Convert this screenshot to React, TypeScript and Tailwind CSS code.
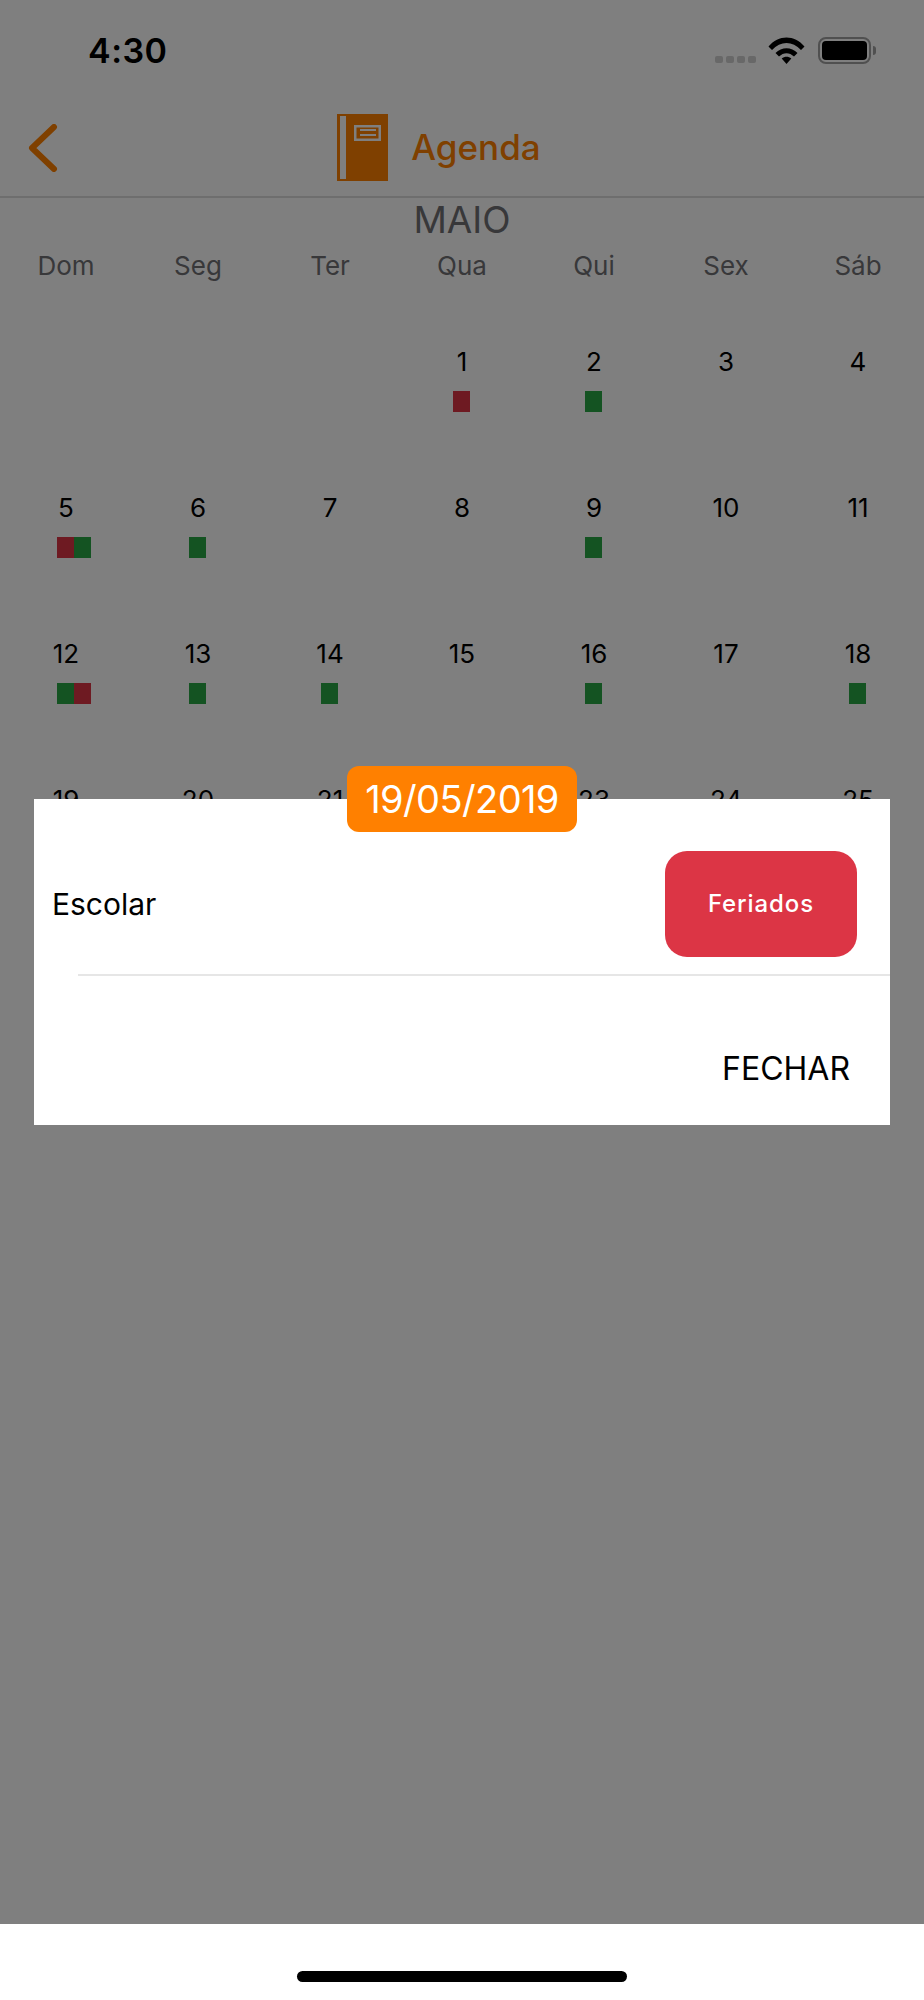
import React from "react";

const FONT = { fontFamily: "Inter, 'Liberation Sans', sans-serif" };

type Mark = "r" | "g";
const weekdays = ["Dom", "Seg", "Ter", "Qua", "Qui", "Sex", "Sáb"];
const days: (null | { n: number; m?: Mark[] })[] = [
  null, null, null,
  { n: 1, m: ["r"] }, { n: 2, m: ["g"] }, { n: 3 }, { n: 4 },
  { n: 5, m: ["r", "g"] }, { n: 6, m: ["g"] }, { n: 7 }, { n: 8 }, { n: 9, m: ["g"] }, { n: 10 }, { n: 11 },
  { n: 12, m: ["g", "r"] }, { n: 13, m: ["g"] }, { n: 14, m: ["g"] }, { n: 15 }, { n: 16, m: ["g"] }, { n: 17 }, { n: 18, m: ["g"] },
  { n: 19 }, { n: 20 }, { n: 21 }, { n: 22 }, { n: 23 }, { n: 24 }, { n: 25 },
  { n: 26 }, { n: 27 }, { n: 28 }, { n: 29 }, { n: 30 }, { n: 31 },
];

function StatusBar() {
  return (
    <div className="h-[114px] flex items-start justify-between pl-[88px] pr-[48px] pt-[30px]">
      <span className="text-[34px] leading-[42px] font-semibold text-black tracking-[0.5px]">4:30</span>
      <div className="flex items-start pt-[7px]">
        <div className="flex gap-[3px] mt-[19px] mr-[12px]">
          {[0, 1, 2, 3].map((i) => (
            <span key={i} className="w-[8px] h-[7px] rounded-[2px] bg-[#d0d0d0]" />
          ))}
        </div>
        <svg width="37" height="27" viewBox="0 0 36 27" className="mr-[13px]">
          <path d="M0 9.5 C10 -2.5 26 -2.5 36 9.5 L32.5 13 C24 3.5 12 3.5 3.5 13 Z" fill="#000" />
          <path d="M7 16 C13 9.5 23 9.5 29 16 L25.5 19.5 C21 15 15 15 10.5 19.5 Z" fill="#000" />
          <path d="M13.2 21.5 C16 19.3 20 19.3 22.8 21.5 L18 27 Z" fill="#000" />
        </svg>
        <div className="w-[53px] h-[27px] rounded-[8px] border-[2px] border-[#a0a0a0] p-[2px]">
          <div className="w-full h-full rounded-[4px] bg-black" />
        </div>
        <div className="w-[3px] h-[9px] mt-[9px] ml-[2px] rounded-r-[3px] bg-[#a0a0a0]" />
      </div>
    </div>
  );
}

function NavBar() {
  return (
    <div className="relative h-[84px] border-b-[2px] border-[#dcdcdc] flex justify-center items-start">
      <svg width="30" height="48" viewBox="0 0 30 48" className="absolute left-[28px] top-[10px]">
        <path d="M26 3 L4 24 L26 45" fill="none" stroke="#ff8000" strokeWidth="6" strokeLinecap="round" strokeLinejoin="round" />
      </svg>
      <div className="flex items-center mr-[46px]">
        <svg width="51" height="67" viewBox="0 0 51 67">
          <rect width="51" height="67" fill="#ff8000" />
          <rect x="3" y="2" width="6" height="63" fill="#fff" />
          <rect x="17" y="11" width="27" height="16" fill="#fff" />
          <rect x="19.5" y="13.5" width="22" height="11" fill="#ff8000" />
          <rect x="23" y="15" width="16" height="2" fill="#fff" />
          <rect x="23" y="20" width="16" height="2" fill="#fff" />
        </svg>
        <span className="ml-[23px] mb-[2px] text-[35px] leading-[42px] font-medium text-[#ff8000]">Agenda</span>
      </div>
    </div>
  );
}

function Calendar() {
  return (
    <div>
      <div className="h-[44px] leading-[44px] text-center text-[37px] text-[#707074]">MAIO</div>
      <div className="grid grid-cols-7 h-[104px]">
        {weekdays.map((d) => (
          <div key={d} className="text-center text-[26px] leading-[48px] text-[#707074]">{d}</div>
        ))}
      </div>
      <div className="grid grid-cols-7 auto-rows-[146px]">
        {days.map((d, i) => (
          <div key={i} className="flex flex-col items-center">
            {d && (
              <>
                <span className="text-[26px] leading-[32px] text-black">{d.n}</span>
                <div className="flex w-[17px] mt-[13px] mr-[1px]">
                  {d.m?.map((m, j) => (
                    <span key={j} className={m === "r" ? "shrink-0 w-[17px] h-[21px] bg-[#dc3545]" : "shrink-0 w-[17px] h-[21px] bg-[#28a745]"} />
                  ))}
                </div>
              </>
            )}
          </div>
        ))}
      </div>
    </div>
  );
}

function Modal() {
  return (
    <div className="absolute left-[34px] top-[799px] w-[856px] h-[326px] bg-white">
      <div className="absolute left-[313px] -top-[33px] w-[230px] h-[66px] rounded-[12px] bg-[#ff8000] flex items-center justify-center text-[38px] tracking-[-0.6px] text-white">
        19/05/2019
      </div>
      <div className="h-[177px] flex flex-col">
        <div className="flex items-center justify-between pl-[18px] pr-[33px] pt-[52px]">
          <span className="text-[30px] leading-[40px] text-black">Escolar</span>
          <div className="w-[192px] h-[106px] rounded-[22px] bg-[#dc3545] flex items-center justify-center text-[24px] tracking-[0.9px] font-medium text-white">
            Feriados
          </div>
        </div>
        <div className="ml-[44px] h-[2px] bg-[#e6e6e6] mt-[17px]" />
      </div>
      <div className="flex justify-end pr-[40px] pt-[73px]">
        <span className="text-[32px] leading-[40px] text-black">FECHAR</span>
      </div>
    </div>
  );
}

export default function App() {
  return (
    <div className="relative w-[924px] h-[2000px] bg-white overflow-hidden" style={FONT}>
      <StatusBar />
      <NavBar />
      <Calendar />
      <div className="absolute left-0 top-0 w-full h-[1924px] bg-black/[0.502]" />
      <Modal />
      <div className="absolute left-[297px] top-[1971px] w-[330px] h-[11px] rounded-full bg-black" />
    </div>
  );
}
